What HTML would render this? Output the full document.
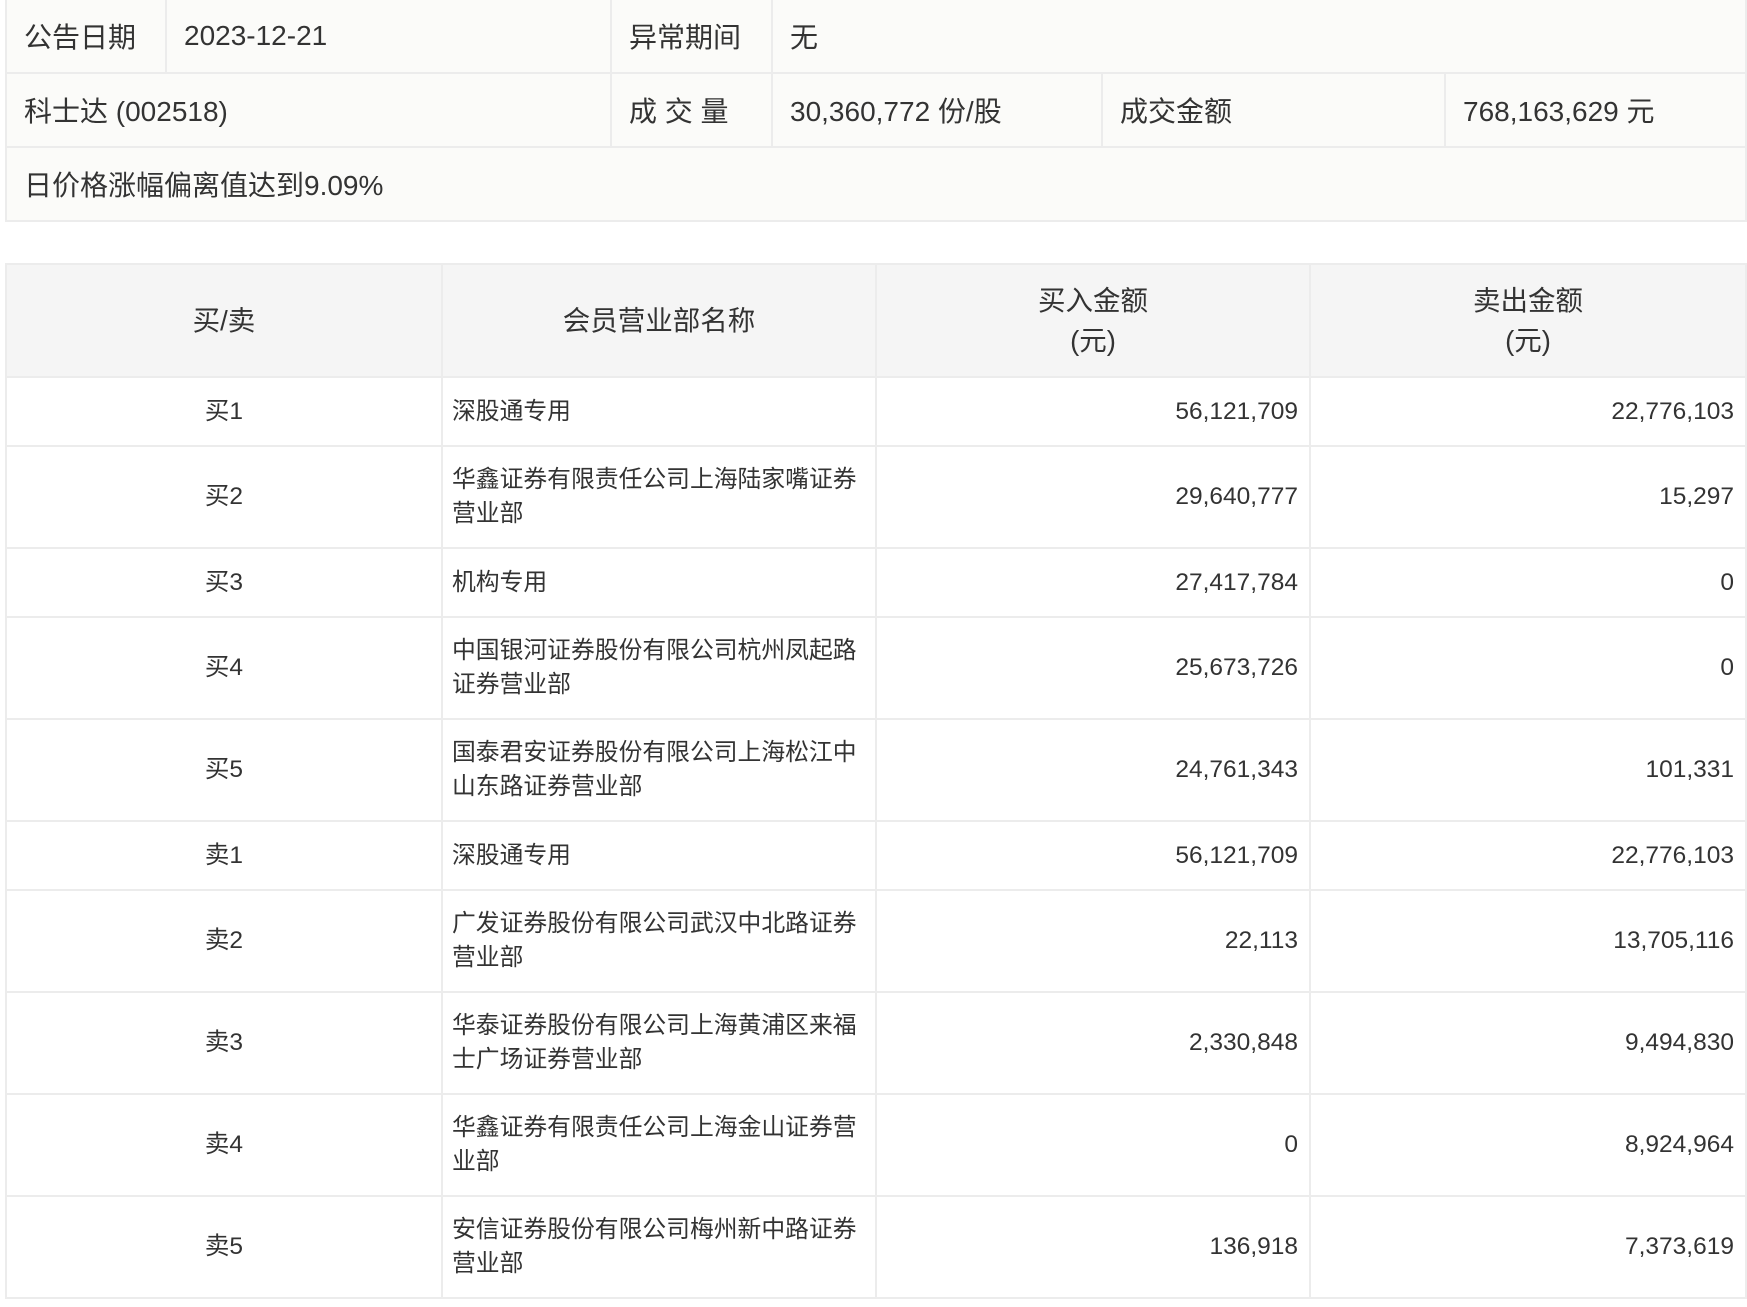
<!DOCTYPE html>
<html><head><meta charset="utf-8"><style>
*{margin:0;padding:0;box-sizing:border-box}
body{width:1747px;height:1307px;background:#fff;font-family:"Liberation Sans","Noto Sans CJK SC",sans-serif;color:#333;position:relative;overflow:hidden}
table{border-collapse:collapse;position:absolute;left:5px;table-layout:fixed}
td,th{border:2px solid #ececec;font-weight:normal}
#t1{top:-2px;width:1740px;background:#fbfbf9;font-size:28px}
#t1 td{height:74px;padding:0 0 0 17px;vertical-align:middle}
#t2{top:263px;width:1740px;font-size:24.5px}
#t2 th{background:#f5f5f5;height:113px;font-size:27.5px;line-height:40px;text-align:center}
#t2 td{padding:0 11px;line-height:34px}
#t2 td.n{padding:0 2px 0 9px;font-size:23.8px}
#t2 td.c{text-align:center}
#t2 td.r{text-align:right}
tr.s td{height:69px}
tr.d td{height:102px}
</style></head><body>
<table id="t1">
<colgroup><col style="width:160px"><col style="width:445px"><col style="width:161px"><col style="width:330px"><col style="width:343px"><col style="width:301px"></colgroup>
<tr><td>公告日期</td><td>2023-12-21</td><td>异常期间</td><td colspan="3">无</td></tr>
<tr><td colspan="2">科士达 (002518)</td><td>成 交 量</td><td>30,360,772 份/股</td><td>成交金额</td><td>768,163,629 元</td></tr>
<tr><td colspan="6">日价格涨幅偏离值达到9.09%</td></tr>
</table>
<table id="t2">
<colgroup><col style="width:436px"><col style="width:434px"><col style="width:434px"><col style="width:436px"></colgroup>
<tr><th>买/卖</th><th>会员营业部名称</th><th>买入金额<br>(元)</th><th>卖出金额<br>(元)</th></tr>
<tr class="s"><td class="c">买1</td><td class="n">深股通专用</td><td class="r">56,121,709</td><td class="r">22,776,103</td></tr>
<tr class="d"><td class="c">买2</td><td class="n">华鑫证券有限责任公司上海陆家嘴证券营业部</td><td class="r">29,640,777</td><td class="r">15,297</td></tr>
<tr class="s"><td class="c">买3</td><td class="n">机构专用</td><td class="r">27,417,784</td><td class="r">0</td></tr>
<tr class="d"><td class="c">买4</td><td class="n">中国银河证券股份有限公司杭州凤起路证券营业部</td><td class="r">25,673,726</td><td class="r">0</td></tr>
<tr class="d"><td class="c">买5</td><td class="n">国泰君安证券股份有限公司上海松江中山东路证券营业部</td><td class="r">24,761,343</td><td class="r">101,331</td></tr>
<tr class="s"><td class="c">卖1</td><td class="n">深股通专用</td><td class="r">56,121,709</td><td class="r">22,776,103</td></tr>
<tr class="d"><td class="c">卖2</td><td class="n">广发证券股份有限公司武汉中北路证券营业部</td><td class="r">22,113</td><td class="r">13,705,116</td></tr>
<tr class="d"><td class="c">卖3</td><td class="n">华泰证券股份有限公司上海黄浦区来福士广场证券营业部</td><td class="r">2,330,848</td><td class="r">9,494,830</td></tr>
<tr class="d"><td class="c">卖4</td><td class="n">华鑫证券有限责任公司上海金山证券营业部</td><td class="r">0</td><td class="r">8,924,964</td></tr>
<tr class="d"><td class="c">卖5</td><td class="n">安信证券股份有限公司梅州新中路证券营业部</td><td class="r">136,918</td><td class="r">7,373,619</td></tr>
</table>
</body></html>
